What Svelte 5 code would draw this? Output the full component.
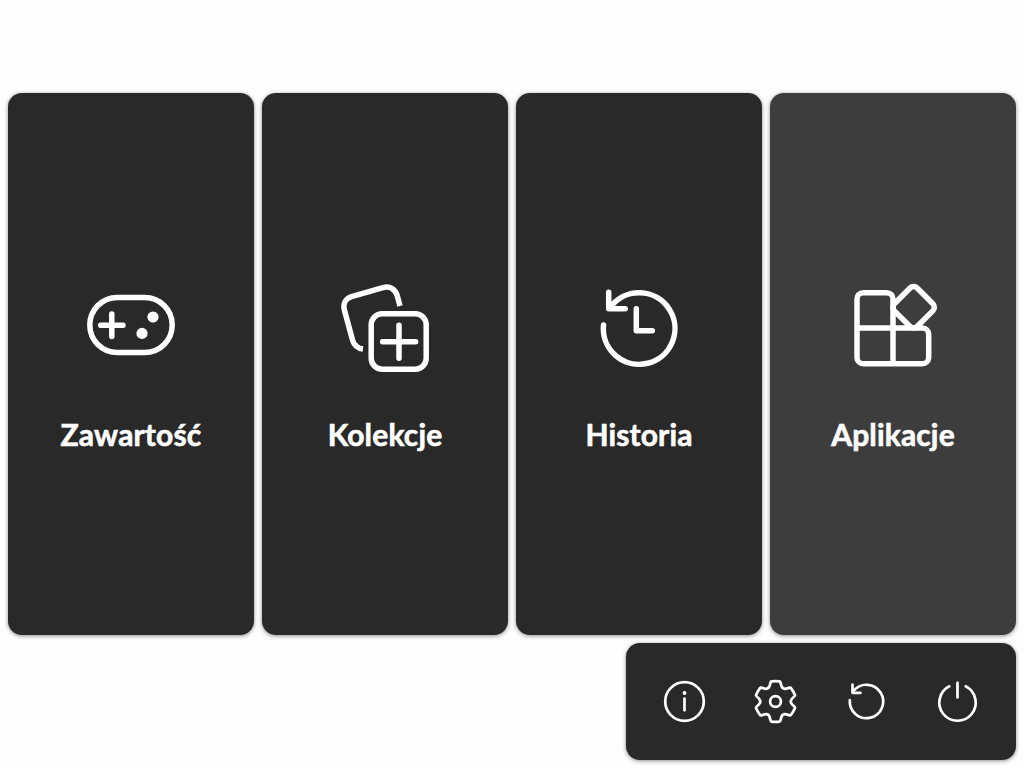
<script>
  const cards = [
    { id: 'content', label: 'Zawartość' },
    { id: 'collections', label: 'Kolekcje' },
    { id: 'history', label: 'Historia' },
    { id: 'apps', label: 'Aplikacje', active: true }
  ];
  const actions = ['info', 'settings', 'reload', 'power'];

  // One sixth of the gear outline, repeated around the centre.
  function gearPath() {
    const pt = (x, y, deg) => {
      const a = (deg * Math.PI) / 180;
      return `${(x * Math.cos(a) - y * Math.sin(a)).toFixed(2)} ${(x * Math.sin(a) + y * Math.cos(a)).toFixed(2)}`;
    };
    let d = `M${pt(-3.9, -20.1, 0)}`;
    for (let k = 0; k < 6; k++) {
      const a = k * 60;
      d += `Q${pt(0, -20.6, a)} ${pt(3.9, -20.1, a)}Q${pt(4.7, -20, a)} ${pt(4.9, -19.2, a)}`;
      d += `L${pt(5.8, -15.8, a)}Q${pt(6.9, -12, a)} ${pt(-5.8, -15.8, a + 60)}`;
      d += `L${pt(-4.9, -19.2, a + 60)}Q${pt(-4.7, -20, a + 60)} ${pt(-3.9, -20.1, a + 60)}`;
    }
    return d + 'Z';
  }
</script>

<main>
  <div class="cards">
    {#each cards as card}
      <button class="card" class:active={card.active}>
        <svg class="big" viewBox="0 0 110 105" aria-hidden="true">
          {#if card.id === 'content'}
            <rect x="13.8" y="22.5" width="82.4" height="55.1" rx="27.5" />
            <path d="M24.7 50.2H47M35.8 39.1v22.3" />
            <circle class="dot" cx="77" cy="42" r="5.6" />
            <circle class="dot" cx="66" cy="58.4" r="5.6" />
          {:else if card.id === 'collections'}
            <path class="butt" d="M33 74C28 73.5 24 70 22.5 65L14.4 35C12.6 28.5 16 23.5 21.5 21.7L53 12.7C60 10.5 65.5 14.5 67.2 20.5L70 31" />
            <rect x="41.2" y="38.8" width="55" height="55.4" rx="11" />
            <path d="M52.6 66.7h33M69 50.2v33" />
          {:else if card.id === 'history'}
            <path d="M19.5 50A35.8 35.8 0 1 0 26.5 32M24.7 17.3v16.4h16.5M52.3 33.7v22h16" />
          {:else}
            <path d="M55 53V24a6.3 6.3 0 0 0-6.3-6.3H25.3A6.3 6.3 0 0 0 19 24v58.4a6.3 6.3 0 0 0 6.3 6.3h59.1a6.3 6.3 0 0 0 6.3-6.3V59.3A6.3 6.3 0 0 0 84.4 53H19M55 53v35.7" />
            <rect x="59.5" y="16.2" width="32.2" height="32.2" rx="5" transform="rotate(45 75.6 32.3)" />
          {/if}
        </svg>
        <span class="label">{card.label}</span>
      </button>
    {/each}
  </div>

  <div class="toolbar">
    {#each actions as action}
      <button class="action" aria-label={action}>
        <svg class="small" viewBox="-29.5 -31.5 60 64" aria-hidden="true">
          {#if action === 'info'}
            <circle r="19.3" />
            <path d="M0-3V8.8" />
            <circle class="dot" cy="-8.5" r="1.9" />
          {:else if action === 'settings'}
            <path d={gearPath()} />
            <circle r="5.4" />
          {:else if action === 'reload'}
            <path d="M-16.7-1.4A16.7 16.7 0 1 0-13-10.6M-14-16.8v8.1h8" />
          {:else}
            <path d="M-8.2-15.2A18.2 18.2 0 1 0 8.2-15.2M0-18.7V-4" />
          {/if}
        </svg>
      </button>
    {/each}
  </div>
</main>

<style>
  :global(body) {
    background: #fefefe;
  }

  main {
    box-sizing: border-box;
    width: 1024px;
    height: 768px;
    padding: 93px 8px 8px;
    display: flex;
    flex-direction: column;
    gap: 8px;
  }

  .cards {
    display: grid;
    grid-template-columns: repeat(4, 1fr);
    gap: 8px;
    height: 542px;
  }

  button {
    margin: 0;
    padding: 0;
    border: 0;
    background: none;
    color: #fff;
  }

  .card {
    display: flex;
    flex-direction: column;
    align-items: center;
    padding-top: 182px;
    border-radius: 14px;
    background: #292929;
    box-shadow: 0 1px 4px rgba(0, 0, 0, 0.45);
  }

  .card.active {
    background: #3d3d3d;
  }

  svg {
    display: block;
    fill: none;
    stroke: #fff;
    stroke-linecap: round;
    stroke-linejoin: round;
  }

  .big {
    width: 110px;
    height: 105px;
    stroke-width: 5.5;
  }

  .small {
    width: 60px;
    height: 64px;
    stroke-width: 2.7;
  }

  .butt {
    stroke-linecap: butt;
  }

  .dot {
    fill: #fff;
    stroke: none;
  }

  .label {
    margin-top: 34px;
    font: 700 30px/40px Lato, sans-serif;
    letter-spacing: 0.15px;
    -webkit-text-stroke: 0.6px #fff;
    white-space: nowrap;
  }

  .toolbar {
    align-self: flex-end;
    box-sizing: border-box;
    width: 390px;
    height: 117px;
    padding: 0 28.5px;
    display: flex;
    align-items: center;
    justify-content: space-between;
    border-radius: 14px;
    background: #292929;
    box-shadow: 0 1px 4px rgba(0, 0, 0, 0.45);
  }
</style>
